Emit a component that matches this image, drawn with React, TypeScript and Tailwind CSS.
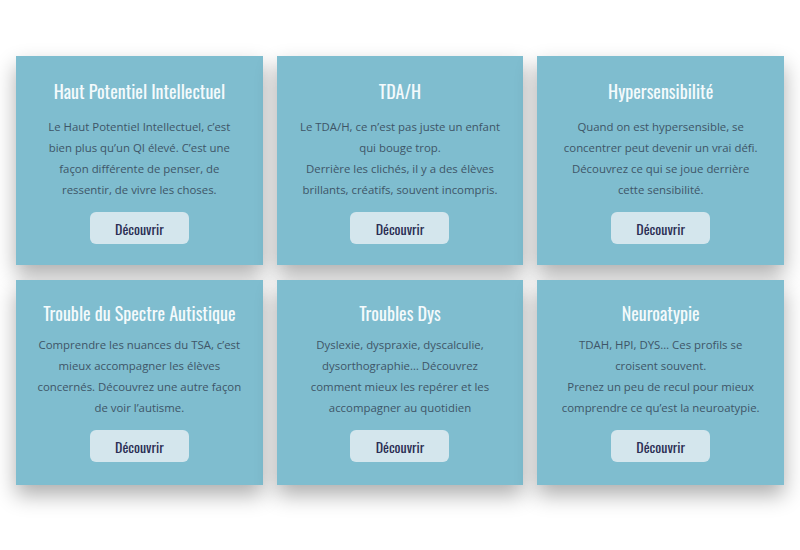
import React from "react"

type Item = { title: string; text: React.ReactNode }

const items: Item[] = [
  {
    title: "Haut Potentiel Intellectuel",
    text: "Le Haut Potentiel Intellectuel, c’est bien plus qu’un QI élevé. C’est une façon différente de penser, de ressentir, de vivre les choses.",
  },
  {
    title: "TDA/H",
    text: (
      <>
        Le TDA/H, ce n’est pas juste un enfant qui bouge trop.
        <br />
        Derrière les clichés, il y a des élèves brillants, créatifs, souvent incompris.
      </>
    ),
  },
  {
    title: "Hypersensibilité",
    text: "Quand on est hypersensible, se concentrer peut devenir un vrai défi. Découvrez ce qui se joue derrière cette sensibilité.",
  },
  {
    title: "Trouble du Spectre Autistique",
    text: "Comprendre les nuances du TSA, c’est mieux accompagner les élèves concernés. Découvrez une autre façon de voir l’autisme.",
  },
  {
    title: "Troubles Dys",
    text: "Dyslexie, dyspraxie, dyscalculie, dysorthographie… Découvrez comment mieux les repérer et les accompagner au quotidien",
  },
  {
    title: "Neuroatypie",
    text: (
      <>
        TDAH, HPI, DYS… Ces profils se croisent souvent.
        <br />
        Prenez un peu de recul pour mieux comprendre ce qu’est la neuroatypie.
      </>
    ),
  },
]

const display = "font-['Oswald','DejaVu_Sans_Condensed','Liberation_Sans_Narrow',sans-serif]"

function Card({ item, top }: { item: Item; top: boolean }) {
  return (
    <div
      className={`flex flex-col items-center bg-[#7fbdcf] px-[20px] text-center shadow-[0_10px_20px_rgba(0,0,0,0.32)] ${
        top ? "pt-[22px] pb-[21px]" : "pt-[20px] pb-[23px]"
      }`}
    >
      <h3 className={`${display} text-[18px] leading-[26px] font-normal text-[#f4fafc]`}>{item.title}</h3>
      <p
        className={`font-['Open_Sans',sans-serif] text-[11.4px] leading-[21px] text-[#3e5567] ${
          top ? "mt-[12px]" : "mt-[8px]"
        }`}
      >
        {item.text}
      </p>
      <button
        className={`${display} mt-[12px] h-[32px] w-[99px] rounded-[6px] bg-[#d4e6ed] text-[14px] font-normal text-[#2b2e54]`}
      >
        Découvrir
      </button>
    </div>
  )
}

export default function App() {
  return (
    <div className="h-[550px] w-[800px] bg-white px-4 pt-[56px]">
      <div className="grid grid-cols-3 gap-x-[14px] gap-y-[15px]">
        {items.map((item, i) => (
          <Card key={item.title} item={item} top={i < 3} />
        ))}
      </div>
    </div>
  )
}
